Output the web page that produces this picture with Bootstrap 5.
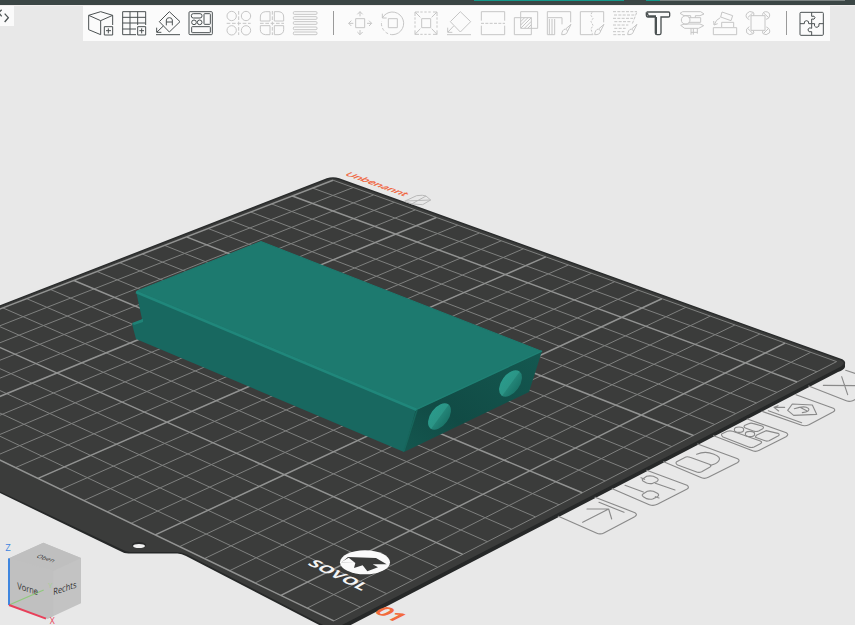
<!DOCTYPE html>
<html lang="de">
<head>
<meta charset="utf-8">
<meta name="viewport" content="width=device-width, initial-scale=1">
<title>Unbenannt</title>
<link href="https://cdn.jsdelivr.net/npm/bootstrap@5.3.0/dist/css/bootstrap.min.css" rel="stylesheet">
<style>
body{background:#e8e8e8;font-family:"Open Sans","Noto Sans",sans-serif}
.topstrip{height:5px;background:#3b4645;padding-left:474px;padding-right:10px}
.tab-on{width:150px;height:1px;background:#14998b}
.tab-go{width:14px;height:1px;background:#14998b;margin-left:22px}
.tab-off{height:1px;background:#7c8483}
.stage{z-index:0}
.stage svg{display:block}
.toolrow{z-index:1;padding-right:25px;border-top:1px solid #f2eeee}
.sidebtn{width:14px;height:20px;background:#fafafa}
.tools{height:35px;margin-left:69px;padding:0 7px 1px 6px;background:#fbfbfb}
.tools .tool{width:24px;height:24px;padding:0;border:0;background:none;display:block;line-height:0}
.tools svg{width:24px;height:24px;fill:none;stroke:#4b5152;stroke-width:3;overflow:visible}
.tools .tool:disabled svg{stroke:#c6c6c6}
.g-add{width:124px}
.g-lay{width:91px;margin-left:13px}
.g-edit{margin-left:14px;margin-right:16px}
.rule{width:1px;height:24px;background:#9a9a9a}
.rule-a{margin-left:16px}
.rule-b{margin-right:12px}
</style>
<script src="https://cdn.jsdelivr.net/npm/bootstrap@5.3.0/dist/js/bootstrap.bundle.min.js"></script>
</head>
<body class="vh-100 overflow-hidden position-relative">

<main class="stage position-absolute top-0 start-0 w-100 h-100">
<svg class="w-100 h-100" viewBox="0 0 855 625" preserveAspectRatio="xMidYMid slice" role="img" aria-label="Druckplatte">
  <defs>
    <linearGradient id="endFace" x1="0" y1="1" x2="1" y2="0"><stop offset="0" stop-color="#14574f"/><stop offset=".35" stop-color="#114b45"/><stop offset="1" stop-color="#145850"/></linearGradient>
    <linearGradient id="bore"><stop offset="0" stop-color="#2a9a8b"/><stop offset=".5" stop-color="#2b9586"/><stop offset=".55" stop-color="#238477"/><stop offset="1" stop-color="#1a7468"/></linearGradient>
  </defs>

  <!-- build plate -->
  <path fill="#262828" d="M845 363L845 367Q844 370 838 372L345 628H325L186 556Q181 553 176 553.500H130Q125 554 120 551L0 493V480L500 300Z"/>
  <path fill="#3b3c3b" d="M-5 308L327 179Q333 177 339 179L842 360Q847 363 842 366L342 625 325 626 188 555Q182 552 176 552H130Q126 552 121 549L-5 489Z"/>
  <path fill="none" stroke="#2b2d2d" stroke-width="1.5" d="M-5 308L327 179Q333 177 339 179L842 360Q847 363 842 366"/>
  <g id="grid" fill="none"></g>
  <ellipse cx="139" cy="545" rx="7" ry="3" fill="#2a2b2b"/>
  <ellipse cx="139" cy="546" rx="6" ry="2" fill="#f2f2f2"/>

  <!-- plate name -->
  <g transform="translate(300 160) scale(.33333)">
    <text transform="matrix(.92 .33 -.66 .31 133 44)" font-family="Open Sans" font-size="37" fill="#f0623a" stroke="#f0623a" stroke-width="1.5">Unbenannt</text>
    <path fill="none" stroke="#b9b9b9" stroke-width="3" d="M313 124L350 107Q370 104 378 108L392 120 368 134Q335 135 313 124ZM320 123L392 120M335 132L378 108"/>
  </g>

  <!-- maker's logo and plate number -->
  <g transform="translate(290 530) scale(.33333)">
    <ellipse cx="225" cy="97" rx="75" ry="36" fill="#fafafa"/>
    <path fill="#3b3c3b" d="M174 81L258 84 290 103 248 103 264 112 232 124 218 106 192 114 196 99 153 98Z"/>
    <path fill="#fafafa" d="M176 83L196 99 150 98Z"/>
    <text transform="matrix(.93 .45 -.7 .42 50 103)" font-family="Open Sans" font-weight="700" font-size="53" fill="#f4f4f4">SOVOL</text>
    <text transform="matrix(.9 .41 -.8 .4 248 246)" font-family="Open Sans" font-weight="700" font-size="68" fill="#f26b3c">01</text>
  </g>

  <!-- plate actions -->
  <g transform="translate(550 345) scale(.33333)" fill="none" stroke="#8a8a8a" stroke-width="3.4" stroke-linecap="round" stroke-linejoin="round">
    <path d="M135 457L255 503Q264 509 254 515L163 563Q151 570 139 564L25 514M111 492L176 492 185 522M98 532L176 492M147 472L222 502"/>
    <path d="M290 376L411 421Q420 427 410 433L322 478Q310 484 298 479L187 431M273 398L284 403M316 415L375 435M278 402L290 394Q300 391 310 394L322 400Q328 405 320 410L308 415Q300 417 290 414L280 409Q275 405 278 402ZM225 421L280 441M316 455L327 459M280 446L292 439Q300 436 310 439L322 445Q330 450 322 455L308 462Q300 464 290 461L280 455Q273 450 280 446Z"/>
    <path d="M443 297L563 341Q572 347 562 353L475 397Q463 403 451 397L341 350M380 350L403 338Q411 333 420 337L478 358Q487 362 479 367L455 380Q447 384 438 380L383 360Q375 355 380 350ZM440 328Q465 317 490 327 516 337 506 348 500 357 481 361"/>
    <path d="M592 222L709 263Q718 269 708 275L628 316Q616 322 604 316L491 272M516 266L532 259Q540 256 548 259L631 288Q639 292 631 296L612 306Q604 309 596 306L519 276Q512 270 516 266ZM585 241L596 236Q603 233 611 236L636 243Q644 247 638 251L626 258Q618 261 610 258L586 249Q579 245 585 241ZM619 271L648 257 684 265Q691 269 684 273L657 287Q649 290 641 286L616 277Z"/>
    <ellipse cx="567" cy="254" rx="14" ry="8"/><ellipse cx="600" cy="267" rx="14" ry="8"/>
    <path d="M738 149L850 190Q859 195 849 201L777 239Q765 245 753 240L636 199M655 197L755 233M713 196L727 177 787 180 800 208 731 211ZM733 191Q765 181 775 190 782 199 757 203M750 187L770 197M704 187L672 187 686 198M672 187L684 182"/>
    <path d="M887 76L918 86M776 123L885 166Q896 172 908 167L920 162M820 121L918 122M875 95L893 149"/>
  </g>

  <!-- printed part -->
  <path fill="#186860" d="M136 291L142 319 132 324 136 339 404 452 418 409Z"/>
  <path fill="url(#endFace)" d="M416 409L542 351 529 392 404 452Z"/>
  <path fill="#1d7a6f" stroke="#1d7a6f" d="M137 291L261 241.500 541 351 417 409Z"/>
  <path fill="none" stroke="#20877b" stroke-width="2.500" stroke-linejoin="round" d="M136 292L417 410"/>
  <path fill="none" stroke="#1f7f73" stroke-width="1.500" d="M417 409L542 351"/>
  <path fill="none" stroke="#17665c" stroke-width="1.500" d="M417 410L404 451"/>
  <path fill="#1f8276" d="M132 323L143 319V322L134 325Z"/>
  <ellipse cx="439.500" cy="416.500" rx="9" ry="15" transform="rotate(36 439.500 416.500)" fill="url(#bore)"/>
  <ellipse cx="510.500" cy="383.500" rx="9" ry="15" transform="rotate(36 510.500 383.500)" fill="url(#bore)"/>

  <!-- view cube -->
  <g transform="translate(0 480) scale(.33333)">
    <path fill="#c3c3c3" d="M130 188L243 234V370L143 416 27 375V235Z"/>
    <path fill="#c0c0c0" d="M27 235L160 273V408L143 416 27 375Z"/>
    <path fill="#bfbfbf" d="M130 188L243 234 160 273 27 235Z"/>
    <path stroke="#8fc97c" stroke-width="4" d="M27 375L131 330"/>
    <path stroke="#3f86df" stroke-width="6" d="M27 235V375"/>
    <path stroke="#e8405a" stroke-width="6" d="M27 375L138 416"/>
    <g font-family="Open Sans" fill="#333">
      <text transform="matrix(.8 .24 0 1 52 327)" font-size="28">Vorne</text>
      <text transform="matrix(.8 -.27 0 1 160 346)" font-size="28">Rechts</text>
      <text transform="matrix(.8 .24 -.6 .5 107 232)" font-size="25">Oben</text>
      <text x="16" y="214" font-size="29" fill="#3f86df">Z</text>
      <text x="149" y="433" font-size="26" fill="#e8405a">X</text>
      <text x="145" y="325" font-size="22" fill="#a3cf8e">Y</text>
    </g>
  </g>
</svg>
</main>

<header class="topstrip d-flex position-relative">
  <div class="tab-on"></div><div class="tab-go"></div><div class="tab-off flex-grow-1"></div>
</header>

<div class="toolrow d-flex align-items-start position-relative">
  <button class="sidebtn border-0 p-0 d-block lh-1" type="button" aria-label="Seitenleiste einklappen">
    <svg class="d-block" width="14" height="20" viewBox="0 0 42 60" fill="none" stroke="#4b5152" stroke-width="4"><path d="M5 11L-4 20 5 31M14 23L25 35 14 48"/></svg>
  </button>
  <nav class="tools d-flex align-items-center flex-grow-1" aria-label="Werkzeuge">
    <div class="g-add d-flex justify-content-between">
      <button class="tool" type="button" aria-label="Hinzufügen"><svg viewBox="0 0 72 72"><path d="M71 42V13L35 2-1 13V56L35 71V29L-1 13M35 29L71 13M46 47H71V72H46ZM58 52V67M51 59H66"/></svg></button>
      <button class="tool" type="button" aria-label="Platte hinzufügen"><svg viewBox="0 0 72 72"><path d="M71 42V2H2V71H42M24 2V71M47 2V42M2 19H71M2 36H71M2 54H42M47 47H71V72H47ZM59 52V67M52 59H66"/></svg></button>
      <button class="tool" type="button" aria-label="Automatisch ausrichten"><svg viewBox="0 0 72 72"><path d="M40 2L72 32 40 63 10 32ZM31 43V27Q32 20 40 20T49 27V43M31 33H49M0 71H72M22 45L3 63M2 50V64H16"/></svg></button>
      <button class="tool" type="button" aria-label="Anordnen"><svg viewBox="0 0 72 72"><rect x="0" y="2" width="70" height="69" rx="3"/><rect x="7" y="8" width="32" height="13" rx="6"/><rect x="45" y="8" width="19" height="32" rx="2"/><circle cx="15" cy="34" r="7"/><circle cx="32" cy="34" r="7"/><rect x="8" y="47" width="56" height="18" rx="2"/></svg></button>
    </div>
    <div class="g-lay d-flex justify-content-between">
      <button class="tool" type="button" disabled aria-label="In Objekte teilen"><svg viewBox="0 0 72 72"><circle cx="17" cy="15" r="14"/><circle cx="60" cy="15" r="14"/><circle cx="17" cy="58" r="14"/><circle cx="60" cy="58" r="14"/><path stroke-dasharray="11 5" d="M38 0V72M2 37H74"/></svg></button>
      <button class="tool" type="button" disabled aria-label="In Teile teilen"><svg viewBox="0 0 72 72"><path d="M30 2H16Q1 4 1 18V30H30ZM43 2H57Q71 4 71 18V30H43ZM30 71H16Q1 69 1 56V44H30ZM43 71H57Q71 69 71 56V44H43Z"/><path stroke-dasharray="11 5" d="M37 0V72M0 37H72"/></svg></button>
      <button class="tool" type="button" disabled aria-label="Variable Schichthöhe"><svg viewBox="0 0 72 72"><rect x="1" y="2" width="71" height="8" rx="3"/><rect x="1" y="17" width="71" height="8" rx="3"/><rect x="1" y="32" width="71" height="8" rx="3"/><rect x="1" y="48" width="71" height="8" rx="3"/><rect x="1" y="63" width="71" height="8" rx="3"/></svg></button>
    </div>
    <div class="rule rule-a"></div>
    <div class="g-edit d-flex justify-content-between flex-grow-1">
      <button class="tool" type="button" disabled aria-label="Verschieben"><svg viewBox="0 0 72 72"><path d="M23 23H50V50H23ZM36 16V2M28 10L36 2 44 10M36 57V71M28 63L36 71 44 63M16 37H2M10 29L2 37 10 45M57 37H71M63 29L71 37 63 45"/></svg></button>
      <button class="tool" type="button" disabled aria-label="Drehen"><svg viewBox="0 0 72 72"><path d="M22 23H49V50H22ZM4 21A34 34 0 1 1 36 71M4 8V21H17"/><path stroke-dasharray="9 6" d="M36 71A34 34 0 0 1 2 30"/></svg></button>
      <button class="tool" type="button" disabled aria-label="Skalieren"><svg viewBox="0 0 72 72"><path d="M23 23H50V50H23ZM19 19L3 3M3 15V3H15M53 19L69 3M57 3H69V15M19 53L3 70M3 58V70H15M53 53L69 70M57 70H69V58"/><path stroke-dasharray="7 5" d="M19 3H53M19 70H53M3 19V53M69 19V53"/></svg></button>
      <button class="tool" type="button" disabled aria-label="Auf Fläche legen"><svg viewBox="0 0 72 72"><path d="M40 2L71 32 40 63 10 32ZM0 71H72M20 45L3 63M2 50V64H16"/></svg></button>
      <button class="tool" type="button" disabled aria-label="Schneiden"><svg viewBox="0 0 72 72"><path d="M1 29V2H71V29M1 44V71H71V44"/><path stroke-dasharray="9 4" d="M0 37H72"/></svg></button>
      <button class="tool" type="button" disabled aria-label="Boolesche Operation"><svg viewBox="0 0 72 72"><path d="M20 2H71V52H20ZM1 20H52V71H1ZM20 32L32 20M20 42L42 20M21 51L52 20M31 52L52 31M41 52L52 41"/></svg></button>
      <button class="tool" type="button" disabled aria-label="Stützen malen"><svg viewBox="0 0 72 72"><path d="M71 34V2H1V20H45V40M1 20V71H23V24M7 24V71M15 24V71M72 40L56 54 62 60ZM55 54Q45 56 44 71 60 72 62 60"/></svg></button>
      <button class="tool" type="button" disabled aria-label="Naht malen"><svg viewBox="0 0 72 72"><path d="M40 71H1V2H71V34M72 40L56 54 62 60ZM55 54Q45 56 44 71 60 72 62 60"/><path stroke-dasharray="6 4" d="M36 4L32 12 39 22 33 32 39 43 33 54 37 68"/></svg></button>
      <button class="tool" type="button" disabled aria-label="Farbe malen"><svg viewBox="0 0 72 72"><path stroke-dasharray="9 4" d="M0 2H72M3 12H66M0 22H60M4 32H52M0 42H46M4 52H38M0 62H34M1 71H40M71 5L58 38"/><path d="M72 40L56 54 62 60ZM55 54Q45 56 44 71 60 72 62 60"/></svg></button>
      <button class="tool" type="button" aria-label="Text"><svg viewBox="0 0 72 72"><path stroke-width="4" d="M2 3H68Q71 3 71 7V14Q71 18 67 18H45V66Q45 71 40 71H33Q28 71 28 66V18H5Q1 18 1 13V4M5 15H30M31 18V68M4 6L8 18"/></svg></button>
      <button class="tool" type="button" disabled aria-label="Messen"><svg viewBox="0 0 72 72"><path d="M0 7L8 2H62L72 9 60 14H46V20M0 7L12 14H32V20M2 43L13 39H60L71 44 56 52H14ZM33 52V71M40 52V71M52 52V68M33 64H52M26 20H62V34H26"/><circle cx="17" cy="27" r="13"/></svg></button>
      <button class="tool" type="button" disabled aria-label="Zusammenbau"><svg viewBox="0 0 72 72"><path d="M27 3L59 14 54 29 23 18ZM1 50H71V71H1ZM26 48V34H62V48M22 20Q8 26 4 41M2 30L3 42 14 38"/></svg></button>
      <button class="tool" type="button" disabled aria-label="Explodieren"><svg viewBox="0 0 72 72"><path d="M15 14H57V58H15ZM10 26Q-4 20 2 8 10 -3 22 4 26 9 22 14M5 20L20 6M50 14Q48 4 58 2 72 2 71 15 69 24 60 25M53 6L68 20M10 47Q-3 53 2 65 9 75 22 68 26 63 21 59M5 52L20 67M61 48Q75 54 70 66 60 75 51 68 48 63 51 59M67 53L53 67"/></svg></button>
    </div>
    <div class="rule rule-b"></div>
    <button class="tool" type="button" aria-label="Baugruppenansicht"><svg viewBox="0 0 72 72"><rect x="3" y="4" width="70" height="69" rx="3"/><path d="M38 4V16Q47 13 48 20 47 27 38 24V38M38 38H29Q31 29 22 29 14 30 16 38H3M38 38H47Q44 48 54 49 62 48 60 38H73M38 38V52Q28 48 27 57 28 65 38 62V73"/></svg></button>
  </nav>
</div>

<script>
// Grid cell -> screen control points: [cellX, cellY, screenX, screenY]
const pts = [
  [0,22,333,180.5],[5,22,435.7,217.3],[10,22,545.7,257],[22,22,836.7,361.7],
  [22,20,796.7,382],[22,15,694,435.7],[22,10,582.7,492.7],[22,0,333.3,620.7],
  [15,0,155,535],[10,0,40,478.5],[0,20,292.3,195],[0,15,188.3,237.7],
  [0,10,73.3,280.7],[5,5,55,372.7],[10,5,166.7,422]
];
// Least-squares projective fit (normal equations, Gauss-Jordan)
const A = Array.from({length:8}, () => Array(9).fill(0));
const add = (r, b) => r.forEach((v, i) => { r.forEach((w, j) => A[i][j] += v*w); A[i][8] += v*b; });
for (const [x, y, X, Y] of pts) {
  add([x,y,1,0,0,0,-x*X,-y*X], X);
  add([0,0,0,x,y,1,-x*Y,-y*Y], Y);
}
for (let i = 0; i < 8; i++) {
  let p = i;
  for (let r = i; r < 8; r++) if (Math.abs(A[r][i]) > Math.abs(A[p][i])) p = r;
  [A[i], A[p]] = [A[p], A[i]];
  const d = A[i][i];
  A[i] = A[i].map(v => v/d);
  for (let r = 0; r < 8; r++) if (r !== i) { const f = A[r][i]; A[r] = A[r].map((v, k) => v - f*A[i][k]); }
}
const h = A.map(r => r[8]);
const at = (x, y) => {
  const w = h[6]*x + h[7]*y + 1;
  return ((h[0]*x+h[1]*y+h[2])/w).toFixed(1) + ' ' + ((h[3]*x+h[4]*y+h[5])/w).toFixed(1);
};
let thin = '', bold = '';
for (let i = 0; i <= 22; i++) {
  const d = 'M' + at(i,0) + 'L' + at(i,22) + 'M' + at(0,i) + 'L' + at(22,i);
  if (i % 5) thin += d; else bold += d;
}
document.getElementById('grid').innerHTML =
  '<path stroke="#7f807f" d="' + thin + '"/><path stroke="#929392" stroke-width="1.500" d="' + bold + '"/>';
</script>
</body>
</html>
